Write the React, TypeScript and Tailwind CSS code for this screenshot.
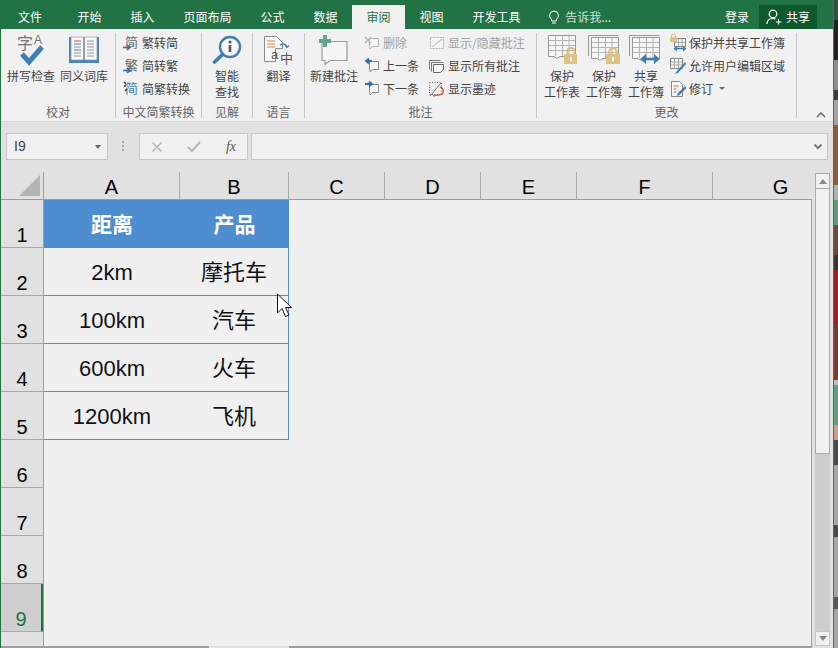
import type { ReactNode } from "react";

const Bubble = ({ color = "#8a8a8a" }: { color?: string }) => (
  <path d="M5.5 4.5h9v8h-6l-2.5 2.5v-2.5h-.5z" fill="#f6f6f6" stroke={color} strokeWidth="1" />
);

const SpellIcon = () => (
  <svg width="30" height="40" viewBox="0 -3 30 40">
    <text x="1" y="16" fontSize="16" fill="#777" fontFamily="Noto Sans CJK SC">字</text>
    <text x="18" y="11" fontSize="12" fill="#777" fontFamily="Liberation Sans">A</text>
    <path d="M6 21l7 8 13-15" fill="none" stroke="#3e7eb5" strokeWidth="5" />
  </svg>
);

const BookIcon = () => (
  <svg width="32" height="28" viewBox="0 0 32 28">
    <path d="M1 1h30v26H1z" fill="#4a86bd" />
    <path d="M3 1h12.5v23H3zM16.5 1H29v23H16.5z" fill="#f7f7f7" stroke="#888" strokeWidth=".6" />
    <path d="M6 5h7" stroke="#d9534f" strokeWidth="1" />
    <path d="M6 8h7M6 14h7" stroke="#4a86bd" strokeWidth="1" />
    <path d="M6 11h7M6 17h7M6 20h7M19 5h7M19 8h7M19 11h7M19 14h7M19 17h7M19 20h7" stroke="#999" strokeWidth="1" />
  </svg>
);

const ConvertIcon = ({ ch, mode }: { ch: string; mode: "down" | "both" }) => (
  <svg width="16" height="22" viewBox="0 -2 16 22">
    <text x="2" y="13" fontSize="13" fill={mode === "both" ? "#3e7eb5" : "#666"} fontFamily="Noto Sans CJK SC">{ch}</text>
    {mode === "down" ? (
      <path d="M0 13.5h6M4 11l3 2.5-3 2.5" fill="none" stroke="#2f6fad" strokeWidth="1.6" />
    ) : (
      <path d="M1 2l2 2M1 6h2M2 11l2-2" fill="none" stroke="#333" strokeWidth="1.4" />
    )}
  </svg>
);

const SmartIcon = () => (
  <svg width="30" height="30" viewBox="0 0 30 30">
    <circle cx="18" cy="12" r="10" fill="#f8f8f8" stroke="#3e7eb5" strokeWidth="2.4" />
    <path d="M10.5 19.5L2.5 27" stroke="#3e7eb5" strokeWidth="3.6" strokeLinecap="round" />
    <circle cx="18" cy="7" r="1.6" fill="#555" />
    <path d="M18 10v7" stroke="#555" strokeWidth="2.6" />
  </svg>
);

const TranslateIcon = () => (
  <svg width="31" height="36" viewBox="0 -3 31 36">
    <path d="M1.5 1.5h12l6 6v6h-7v13h-11z" fill="#f8f8f8" stroke="#8a8a8a" />
    <path d="M4 6h8M4 9h8M4 12h8" stroke="#e0813c" strokeWidth="1.1" />
    <path d="M17 10c3-2 6-1 7 2M22 10.500l2 2 2-2" fill="none" stroke="#3e7eb5" strokeWidth="1.2" />
    <text x="8" y="24" fontSize="13" fill="#555" fontFamily="Liberation Sans">a</text>
    <text x="17" y="28" fontSize="13" fill="#555" fontFamily="Noto Sans CJK SC">中</text>
  </svg>
);

const NewCommentIcon = () => (
  <svg width="32" height="31" viewBox="0 0 32 31">
    <path d="M4 6.500h25v19H12l-5 4v-4H4z" fill="#f5f5f5" stroke="#9a9a9a" strokeWidth="1.2" />
    <path d="M1 6h12M7 0v12" stroke="#67a48f" strokeWidth="4" />
  </svg>
);

const DeleteIcon = () => (
  <svg width="16" height="18" viewBox="0 0 16 18">
    <Bubble color="#b5b5b5" />
    <path d="M1 3l6 6M7 3L1 9" stroke="#b5b5b5" strokeWidth="1.6" />
  </svg>
);

const ArrowBubble = ({ dir }: { dir: "left" | "right" }) => (
  <svg width="16" height="18" viewBox="0 0 16 18">
    <Bubble />
    {dir === "left" ? (
      <path d="M8 4H3M5 1.500L2 4l3 2.500" fill="none" stroke="#2f6fad" strokeWidth="1.8" />
    ) : (
      <path d="M1 4h6M5 1.500L8 4 5 6.500" fill="none" stroke="#2f6fad" strokeWidth="1.8" />
    )}
  </svg>
);

const ShowHideIcon = () => (
  <svg width="16" height="16" viewBox="0 0 16 16">
    <path d="M1.500 2.500h13v11h-13z" fill="#f6f6f6" stroke="#b9aeb4" strokeDasharray="2 1" />
    <path d="M3 12L13 4" stroke="#b9aeb4" />
  </svg>
);

const ShowAllIcon = () => (
  <svg width="16" height="16" viewBox="0 0 16 16">
    <path d="M.5 2.500h11M.5 2.500v9" stroke="#777" fill="none" />
    <path d="M2.500 4.500h12M2.500 4.500v9" stroke="#777" fill="none" />
    <path d="M4.500 6.500h10v5l-3 3h-7z" fill="#f8f8f8" stroke="#666" />
  </svg>
);

const InkIcon = () => (
  <svg width="16" height="16" viewBox="0 0 16 16">
    <path d="M.5 1.500h12v12H.5z" fill="none" stroke="#666" strokeDasharray="1 1.500" />
    <path d="M1 15L12 2" stroke="#777" />
    <path d="M11 6c5 2 4 8-1 8-2 0-4 0-6 1" fill="none" stroke="#d9603b" strokeWidth="1.4" />
  </svg>
);

const Grid = ({ x = 0, y = 0 }: { x?: number; y?: number }) => (
  <g transform={`translate(${x} ${y})`}>
    <path d="M.5.500h27v21H12l-3 2-3-2H.5z" fill="#f6f6f6" stroke="#999" />
    <path d="M7.500 1v20M14.500 1v20M21 1v20M1 5.500h26M1 10.500h26M1 15.500h26" stroke="#b5b5b5" />
  </g>
);

const Lock = ({ x, y }: { x: number; y: number }) => (
  <g transform={`translate(${x} ${y})`}>
    <path d="M3.500 7V4.500a3.500 3.500 0 0 1 7 0V7" fill="none" stroke="#dcbc7c" strokeWidth="2" />
    <path d="M0 7h14v10H0z" fill="#dfc184" />
    <path d="M7 10v4" stroke="#fff" strokeWidth="2" />
  </g>
);

const ProtectSheetIcon = () => (
  <svg width="30" height="30" viewBox="0 0 30 30">
    <Grid x={1} y={0} />
    <Lock x={17} y={12} />
  </svg>
);

const ProtectBookIcon = () => (
  <svg width="32" height="30" viewBox="0 0 32 30">
    <path d="M.5 21V.500h30" fill="none" stroke="#999" />
    <Grid x={3} y={2} />
    <Lock x={18} y={12} />
  </svg>
);

const ShareBookIcon = () => (
  <svg width="34" height="30" viewBox="0 0 34 30">
    <path d="M.5 21V.500h30" fill="none" stroke="#999" />
    <Grid x={3} y={2} />
    <path d="M13 24h16" stroke="#3e7eb5" strokeWidth="2.600" />
    <path d="M17 19l-6 5 6 5zM25 19l6 5-6 5z" fill="#3e7eb5" />
  </svg>
);

const ProtectShareIcon = () => (
  <svg width="16" height="18" viewBox="0 0 16 18">
    <path d="M4.500 4.500h11v8h-11z" fill="#f6f6f6" stroke="#888" />
    <path d="M8.500 5v7M12 5v7M5 8.500h10" stroke="#aaa" />
    <path d="M1.500 3V2a2 2 0 0 1 4 0v1" fill="none" stroke="#dcbc7c" />
    <path d="M0 3h7v5H0z" fill="#dfc184" />
    <path d="M5 14.500h10" stroke="#3e7eb5" strokeWidth="1.600" />
    <path d="M7 11.500l-3.500 3 3.500 3zM13 11.500l3.500 3-3.500 3z" fill="#3e7eb5" />
  </svg>
);

const AllowEditIcon = () => (
  <svg width="16" height="18" viewBox="0 0 16 18">
    <path d="M.5 1.500h12v10H.5z" fill="#f6f6f6" stroke="#888" />
    <path d="M4.500 2v9M8.500 2v9M1 5h11M1 8h11" stroke="#aaa" />
    <path d="M15 5l-8 9-2 3 3-1 8-9z" fill="#3e7eb5" />
  </svg>
);

const TrackIcon = () => (
  <svg width="16" height="18" viewBox="0 0 16 18">
    <path d="M1.500 1.500h8l3 3v12h-11z" fill="#f8f8f8" stroke="#888" />
    <path d="M3.500 6h5M3.500 9h3" stroke="#d9603b" />
    <path d="M3.500 12h3" stroke="#3e7eb5" />
    <path d="M15 6l-7 7-1.500 3 3-1 7-7z" fill="#3e7eb5" />
  </svg>
);

const Group = ({ width, label, children }: { width: string; label: string; children: ReactNode }) => (
  <div className={`${width} flex h-full shrink-0`}>
    <div className="flex min-w-0 flex-1 flex-col">
      <div className="flex h-[75px] items-start">{children}</div>
      <div className="h-4 text-center text-[12px] leading-4 text-[#666]">{label}</div>
    </div>
    <div className="mt-1 h-[85px] w-px bg-[#c6c6c6]" />
  </div>
);

const BigButton = ({ width, icon, lines }: { width: string; icon: ReactNode; lines: string[] }) => (
  <div className={`${width} flex shrink-0 flex-col items-center pt-[3px]`}>
    <div className="flex h-9 items-center justify-center">{icon}</div>
    {lines.map((line) => (
      <div key={line} className="whitespace-nowrap text-[12px] leading-4 text-[#444]">{line}</div>
    ))}
  </div>
);

const SmallRow = ({ icon, label, muted, caret }: { icon: ReactNode; label: string; muted?: boolean; caret?: boolean }) => (
  <div className={`flex h-[23px] items-center gap-[3px] whitespace-nowrap text-[12px] ${muted ? "text-[#a3a3a3]" : "text-[#444]"}`}>
    <div className="flex h-[18px] w-4 items-center justify-center">{icon}</div>
    <span>{label}</span>
    {caret && <span className="ml-[3px] h-0 w-0 border-x-[3px] border-t-[3px] border-x-transparent border-t-[#666]" />}
  </div>
);

const tabs = ["开始", "插入", "页面布局", "公式", "数据", "审阅", "视图", "开发工具"];
const columns = [
  { name: "A", width: "w-[136px]" },
  { name: "B", width: "w-[109px]" },
  { name: "C", width: "w-[96px]" },
  { name: "D", width: "w-[96px]" },
  { name: "E", width: "w-[96px]" },
  { name: "F", width: "w-[136px]" },
  { name: "G", width: "w-[136px]" },
];
const rows = [
  ["2km", "摩托车"],
  ["100km", "汽车"],
  ["600km", "火车"],
  ["1200km", "飞机"],
];
const strip = [
  ["h-[20px]", "bg-[#3f4a44]"], ["h-[40px]", "bg-[#23211f]"], ["h-[30px]", "bg-[#8f8f8f]"], ["h-[10px]", "bg-[#3a3a3a]"],
  ["h-[25px]", "bg-[#a5a5a5]"], ["h-[60px]", "bg-[#8a5a3c]"], ["h-[15px]", "bg-[#a9b5ad]"], ["h-[25px]", "bg-[#5d9c78]"],
  ["h-[30px]", "bg-[#6a4a38]"], ["h-[15px]", "bg-[#3a3230]"], ["h-[54px]", "bg-[#9c1f24]"], ["h-[56px]", "bg-[#7a3a2c]"],
  ["h-[5px]", "bg-[#bdbdbd]"], ["h-[40px]", "bg-[#5f9f7f]"], ["h-[15px]", "bg-[#cf9d88]"], ["h-[25px]", "bg-[#4a4a4a]"],
  ["h-[60px]", "bg-[#a6a6a6]"], ["h-[12px]", "bg-[#4a4a4a]"], ["h-[60px]", "bg-[#a6a6a6]"], ["h-[12px]", "bg-[#555]"], ["h-[39px]", "bg-[#a6a6a6]"],
];

export default function App() {
  return (
    <div className="flex h-[648px] w-[838px] overflow-hidden bg-[#e1e1e1] font-['Noto_Sans_CJK_SC','Liberation_Sans',sans-serif]">
      <div className="relative flex h-full w-[833px] shrink-0 flex-col border-l border-[#217346]">
        {/* tabs */}
        <div className="flex h-[29px] shrink-0 items-end bg-[#217346] text-[12px] text-white">
          <div className="flex h-6 w-[62px] items-center justify-center pr-[4px]">文件</div>
          {tabs.map((tab) => (
            <div
              key={tab}
              className={`flex h-6 items-center px-[14.5px] ${tab === "审阅" ? "bg-[#f1f1f1] text-[#217346]" : ""}`}
            >
              {tab}
            </div>
          ))}
          <div className="ml-[13px] flex h-6 items-center gap-[5px] text-[#cfe0d6]">
            <svg width="12" height="15" viewBox="0 0 12 15">
              <path d="M6 1a4.500 4.500 0 0 0-2.500 8.200V11h5V9.200A4.500 4.500 0 0 0 6 1zM4 13h4" fill="none" stroke="#fff" />
            </svg>
            <span>告诉我...</span>
          </div>
          <div className="ml-auto flex h-6 items-center">登录</div>
          <div className="ml-[10px] mr-[16px] flex h-6 w-[58px] items-center gap-[4px] bg-[#0e5a2c] pl-[7px]">
            <svg width="16" height="16" viewBox="0 0 16 16">
              <circle cx="7" cy="5" r="3.800" fill="none" stroke="#fff" strokeWidth="1.200" />
              <path d="M1 15c0-3 2-5.500 6-5.500 1 0 2 .2 2.500.5M12.500 10v5.500M10 13h5.500" fill="none" stroke="#fff" strokeWidth="1.200" />
            </svg>
            <span>共享</span>
          </div>
        </div>

        {/* ribbon */}
        <div className="relative flex h-[93px] shrink-0 border-b border-[#d4d4d4] bg-[#f1f1f1]">
          <Group width="w-[115px]" label="校对">
            <div className="flex gap-[5px] pl-[6px]">
              <BigButton width="w-[48px]" icon={<SpellIcon />} lines={["拼写检查"]} />
              <BigButton width="w-[48px]" icon={<BookIcon />} lines={["同义词库"]} />
            </div>
          </Group>
          <Group width="w-[86px]" label="中文简繁转换">
            <div className="flex flex-col pl-[7px] pt-[2px]">
              <SmallRow icon={<ConvertIcon ch="简" mode="down" />} label="繁转简" />
              <SmallRow icon={<ConvertIcon ch="繁" mode="down" />} label="简转繁" />
              <SmallRow icon={<ConvertIcon ch="简" mode="both" />} label="简繁转换" />
            </div>
          </Group>
          <Group width="w-[51px]" label="见解">
            <div className="flex w-full justify-center">
              <BigButton width="w-[48px]" icon={<SmartIcon />} lines={["智能", "查找"]} />
            </div>
          </Group>
          <Group width="w-[52px]" label="语言">
            <div className="flex w-full justify-center">
              <BigButton width="w-[48px]" icon={<TranslateIcon />} lines={["翻译"]} />
            </div>
          </Group>
          <Group width="w-[232px]" label="批注">
            <div className="flex pl-[5px]">
              <BigButton width="w-[48px]" icon={<NewCommentIcon />} lines={["新建批注"]} />
              <div className="ml-[6px] flex w-[65px] flex-col pt-[2px]">
                <SmallRow icon={<DeleteIcon />} label="删除" muted />
                <SmallRow icon={<ArrowBubble dir="left" />} label="上一条" />
                <SmallRow icon={<ArrowBubble dir="right" />} label="下一条" />
              </div>
              <div className="flex flex-col pt-[2px]">
                <SmallRow icon={<ShowHideIcon />} label="显示/隐藏批注" muted />
                <SmallRow icon={<ShowAllIcon />} label="显示所有批注" />
                <SmallRow icon={<InkIcon />} label="显示墨迹" />
              </div>
            </div>
          </Group>
          <Group width="w-[260px]" label="更改">
            <div className="flex pl-[4px]">
              <BigButton width="w-[42px]" icon={<ProtectSheetIcon />} lines={["保护", "工作表"]} />
              <BigButton width="w-[42px]" icon={<ProtectBookIcon />} lines={["保护", "工作簿"]} />
              <BigButton width="w-[42px]" icon={<ShareBookIcon />} lines={["共享", "工作簿"]} />
              <div className="ml-[3px] flex flex-col pt-[2px]">
                <SmallRow icon={<ProtectShareIcon />} label="保护并共享工作簿" />
                <SmallRow icon={<AllowEditIcon />} label="允许用户编辑区域" />
                <SmallRow icon={<TrackIcon />} label="修订" caret />
              </div>
            </div>
          </Group>
          <svg className="ml-[19px] mt-[82px]" width="10" height="7" viewBox="0 0 10 7">
            <path d="M1 6l4-4 4 4" fill="none" stroke="#666" strokeWidth="1.500" />
          </svg>
        </div>

        {/* formula bar */}
        <div className="flex h-[50px] shrink-0 items-start pl-[5px] pt-[11px]">
          <div className="flex h-[27px] w-[102px] items-center justify-between border border-[#c6c6c6] bg-[#f1f1f1] pl-[7px] pr-[6px] font-['Liberation_Sans',sans-serif] text-[14px] text-[#444]">
            <span>I9</span>
            <span className="h-0 w-0 border-x-[3.5px] border-t-[4px] border-x-transparent border-t-[#666]" />
          </div>
          <div className="ml-[14px] mt-[8px] flex w-[2px] flex-col gap-[2px]">
            <span className="h-[2px] bg-[#a8a8a8]" />
            <span className="h-[2px] bg-[#a8a8a8]" />
            <span className="h-[2px] bg-[#a8a8a8]" />
          </div>
          <div className="ml-[15px] flex h-[27px] w-[109px] items-center justify-between border border-[#c6c6c6] bg-[#f1f1f1] px-[11px]">
            <svg width="12" height="12" viewBox="0 0 12 12">
              <path d="M1.500 1.500l9 9M10.500 1.500l-9 9" stroke="#b5b5b5" strokeWidth="1.500" />
            </svg>
            <svg width="14" height="12" viewBox="0 0 14 12">
              <path d="M1 6l4 4 8-9" fill="none" stroke="#b5b5b5" strokeWidth="2" />
            </svg>
            <span className="font-['Liberation_Serif',serif] text-[14px] italic text-[#555]">fx</span>
          </div>
          <div className="ml-[3px] flex h-[27px] w-[577px] items-center justify-end border border-[#c6c6c6] bg-[#f1f1f1] pr-[4px]">
            <svg width="10" height="7" viewBox="0 0 10 7">
              <path d="M1.500 1.500L5 5l3.500-3.500" fill="none" stroke="#777" strokeWidth="2" />
            </svg>
          </div>
        </div>

        {/* sheet */}
        <div className="flex min-h-0 flex-1 font-['Liberation_Sans','Noto_Sans_CJK_SC',sans-serif]">
          <div className="flex w-[811px] shrink-0 flex-col">
            <div className="flex h-[28px] shrink-0 border-b border-[#9e9e9e]">
              <div className="flex h-full w-[43px] shrink-0 items-end justify-end border-r border-[#9e9e9e] pb-[3px] pr-[3px]">
                <div className="h-[21px] w-[21px] bg-[#b4b4b4] [clip-path:polygon(100%_0,100%_100%,0_100%)]" />
              </div>
              <div className="flex min-w-0 flex-1 overflow-hidden">
                {columns.map((col) => (
                  <div
                    key={col.name}
                    className={`${col.width} shrink-0 border-r border-[#aaaaaa] pt-[3px] text-center text-[20px] leading-[25px] text-black`}
                  >
                    {col.name}
                  </div>
                ))}
              </div>
            </div>
            <div className="flex h-[446px] shrink-0">
              <div className="h-full w-[43px] shrink-0 overflow-hidden border-r border-[#9e9e9e] text-center text-[20px] leading-6">
                {["1", "2", "3", "4", "5", "6", "7", "8", "9", ""].map((n) => (
                  <div
                    key={n}
                    className={`flex h-[48px] items-end justify-center border-b ${n === "9" ? "border-r-2 border-b-[#aaaaaa] border-r-[#217346] bg-[#cfcfcf] text-[#217346]" : "border-[#aaaaaa] text-black"}`}
                  >
                    {n}
                  </div>
                ))}
              </div>
              <div className="min-w-0 flex-1 border-r border-[#9e9e9e] bg-[#f0f0f0]">
                <div className="flex h-[48px] w-[245px] bg-[#4e8dd0] pt-[2px] text-[21px] font-bold text-white">
                  <div className="flex w-[136px] items-center justify-center">距离</div>
                  <div className="flex w-[109px] items-center justify-center">产品</div>
                </div>
                {rows.map(([distance, product]) => (
                  <div key={distance} className="flex h-[48px] w-[245px] border-b border-r border-[#5490d0] pt-[2px] text-[22px] text-[#111]">
                    <div className="flex w-[136px] items-center justify-center">{distance}</div>
                    <div className="flex w-[108px] items-center justify-center">{product}</div>
                  </div>
                ))}
              </div>
            </div>
            <div className="flex h-[2px] shrink-0">
              <div className="w-[208px] bg-[#9e9e9e]" />
              <div className="w-[80px]" />
              <div className="flex-1 bg-[#9e9e9e]" />
            </div>
          </div>
          <div className="ml-[3px] mt-px flex h-[473px] w-[15px] shrink-0 flex-col bg-[#cdcdcd]">
            <div className="flex h-[16px] items-center justify-center border border-[#ababab] bg-[#f1f1f1]">
              <span className="h-0 w-0 border-x-[4.5px] border-b-[5px] border-x-transparent border-b-[#888]" />
            </div>
            <div className="h-[265px] border-x border-b border-[#ababab] bg-[#f1f1f1]" />
            <div className="mt-auto flex h-[15px] items-center justify-center border border-[#c6c6c6] bg-[#f1f1f1]">
              <span className="h-0 w-0 border-x-[4.5px] border-t-[5px] border-x-transparent border-t-[#888]" />
            </div>
          </div>
        </div>

        {/* mouse pointer over the sheet */}
        <svg className="absolute left-[275px] top-[293px]" width="17" height="26" viewBox="0 0 17 26">
          <path d="M1.500 1v19l4.500-4.500 3.500 8 3.500-1.500-3.500-7.500h6z" fill="#fff" stroke="#111" strokeWidth="1" />
        </svg>
      </div>

      {/* desktop behind the window */}
      <div className="flex h-full w-[5px] shrink-0 flex-col border-l border-[#3d7a5a]">
        {strip.map(([height, color], i) => (
          <div key={i} className={`${height} ${color} shrink-0`} />
        ))}
      </div>
    </div>
  );
}
